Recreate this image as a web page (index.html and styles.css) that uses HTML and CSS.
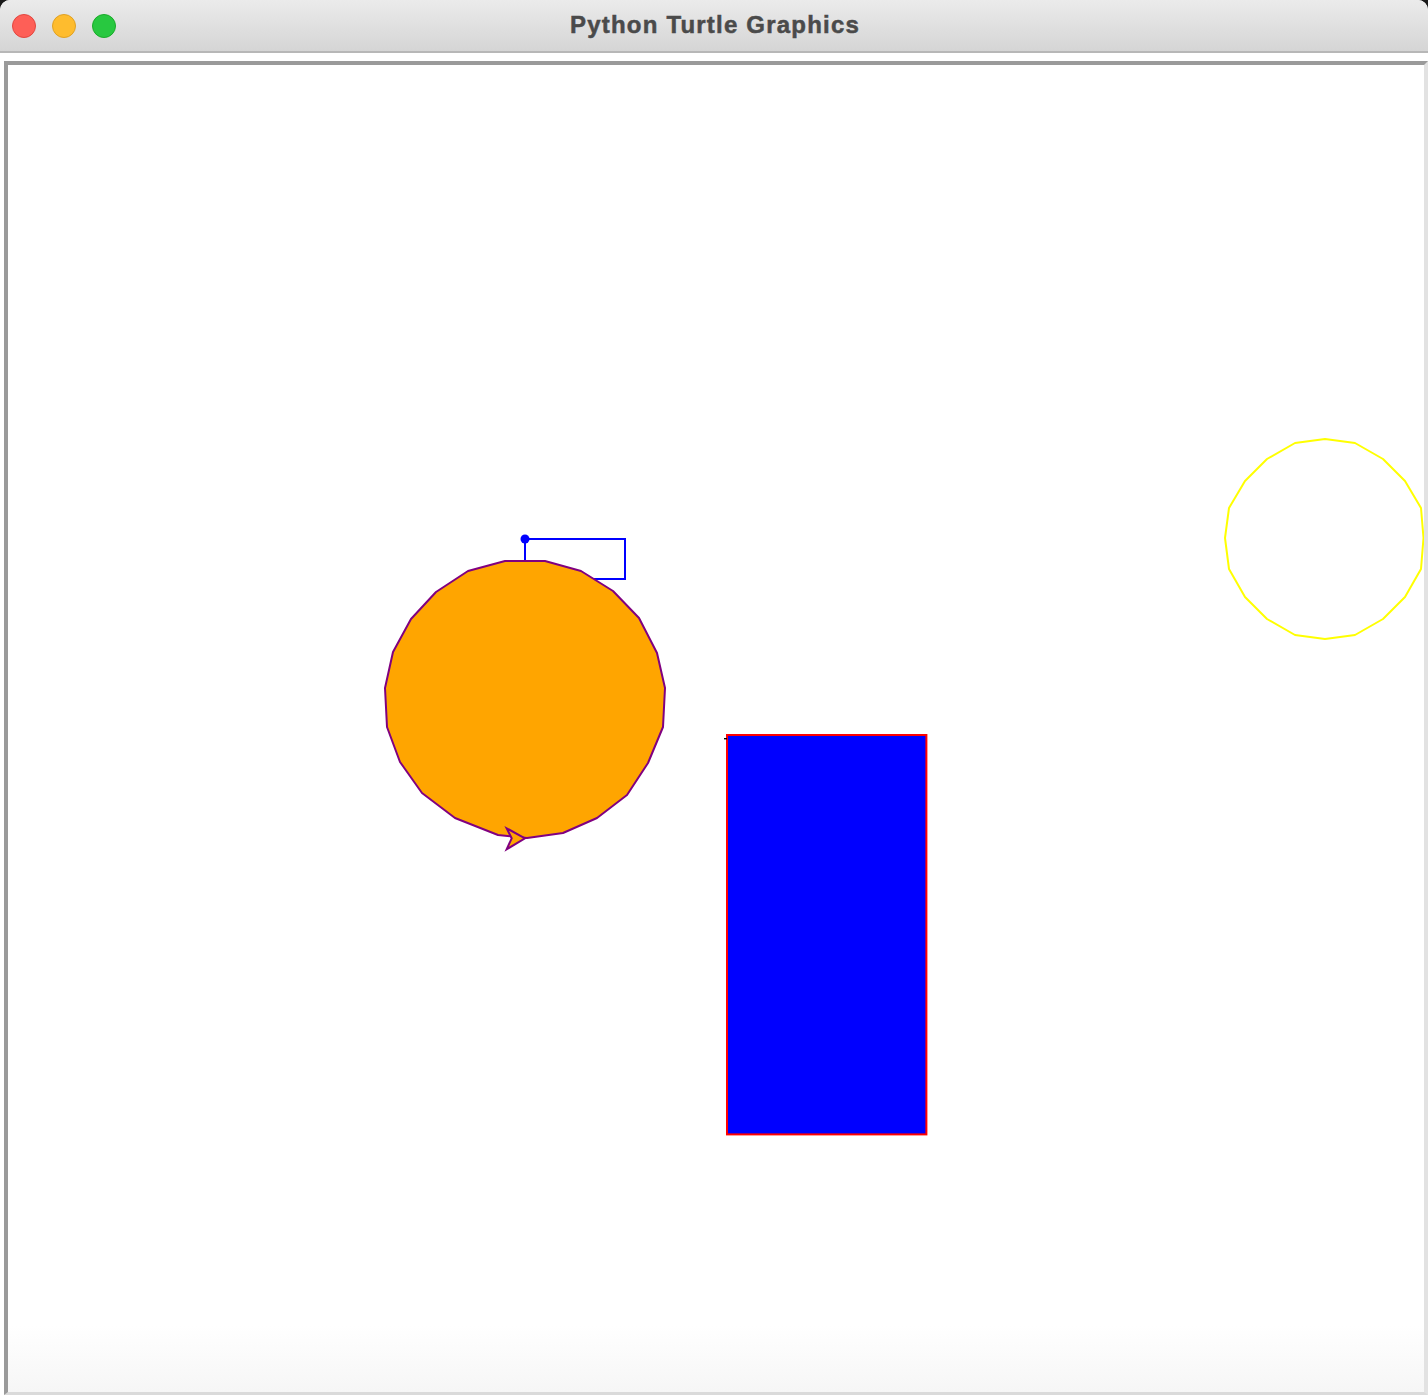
FILE: index.html
```html
<!DOCTYPE html>
<html>
<head>
<meta charset="utf-8">
<title>Python Turtle Graphics</title>
<link rel="stylesheet" href="styles.css">
</head>
<body>
<div class="window">
  <div class="titlebar">
    <div class="lights">
      <span class="light red"></span>
      <span class="light yellow"></span>
      <span class="light green"></span>
    </div>
    <div class="title">Python Turtle Graphics</div>
  </div>
  <div class="body">
    <div class="canvas">
      <svg class="drawing" width="1416" height="1327" viewBox="8 65 1416 1327" xmlns="http://www.w3.org/2000/svg">
        <rect x="525" y="539" width="100" height="40" fill="none" stroke="#0000ff" stroke-width="2"/>
        <circle cx="525" cy="539" r="4.5" fill="#0000ff"/>
        <polygon points="505,561 545,561 581,571 613,591 639,618 657,653 665,688 663,727 648,763 627,795 597,818 563,833 527,838 498,835 455,818 422,793 400,762 387,727 385,688 393,652 411,619 436,592 468,571"
          fill="#ffa500" stroke="#800080" stroke-width="2" stroke-linejoin="round"/>
        <polygon points="525,838.3 506.7,828.3 511.7,838.3 506.7,849.3" fill="#ffa500" stroke="#800080" stroke-width="2" stroke-linejoin="miter"/>
        <rect x="727" y="735" width="199.4" height="399.4" fill="#0000ff" stroke="#ff0000" stroke-width="2"/>
        <rect x="724" y="738" width="3" height="1.4" fill="#000000"/>
        <polygon points="1325,439 1355,443 1383,459 1405,481 1421,508 1423.5,538 1421,569 1405,597 1383,619 1355,635 1325,639 1295,635 1267,619 1245,597 1229,569 1225,538 1229,508 1245,481 1267,459 1295,443"
          fill="none" stroke="#ffff00" stroke-width="2" stroke-linejoin="round"/>
      </svg>
    </div>
  </div>
</div>
</body>
</html>
```
FILE: styles.css
```css
html, body {
  margin: 0;
  padding: 0;
  width: 1428px;
  height: 1398px;
  overflow: hidden;
  background: #1a1a1a;
}

.window {
  width: 1428px;
  height: 1398px;
  display: flex;
  flex-direction: column;
  background: #ffffff;
  border-radius: 10px 10px 0 0;
  overflow: hidden;
}

.titlebar {
  position: relative;
  height: 51px;
  flex: 0 0 51px;
  display: flex;
  align-items: center;
  justify-content: center;
  background: linear-gradient(to bottom, #ebebeb 0%, #d5d5d5 100%);
  border-bottom: 2px solid #b7b7b7;
}

.lights {
  position: absolute;
  left: 12px;
  top: 14px;
  display: flex;
  gap: 16px;
}

.light {
  width: 22px;
  height: 22px;
  border-radius: 50%;
  display: block;
}

.red { background: #fe5f57; border: 1px solid #e2463f; }
.yellow { background: #febc2e; border: 1px solid #e0a123; }
.green { background: #28c840; border: 1px solid #1aab29; }

.title {
  font-family: "Liberation Sans", Arial, sans-serif;
  font-weight: bold;
  font-size: 24px;
  letter-spacing: 1.2px;
  color: #4a4a4a;
  -webkit-text-stroke: 0.5px #4a4a4a;
  margin-top: -2px;
  margin-left: 2px;
}

.body {
  flex: 1;
  padding: 8px 0 3px 4px;
  display: flex;
  background: #ffffff;
}

.canvas {
  flex: 1;
  border-style: solid;
  border-width: 4px 4px 3px 4px;
  border-color: #9a9a9a #e2e2e2 #dadada #9a9a9a;
  background: linear-gradient(to bottom, #ffffff 0%, #ffffff 95%, #f6f6f6 100%);
  display: flex;
}

.drawing {
  display: block;
}
```
